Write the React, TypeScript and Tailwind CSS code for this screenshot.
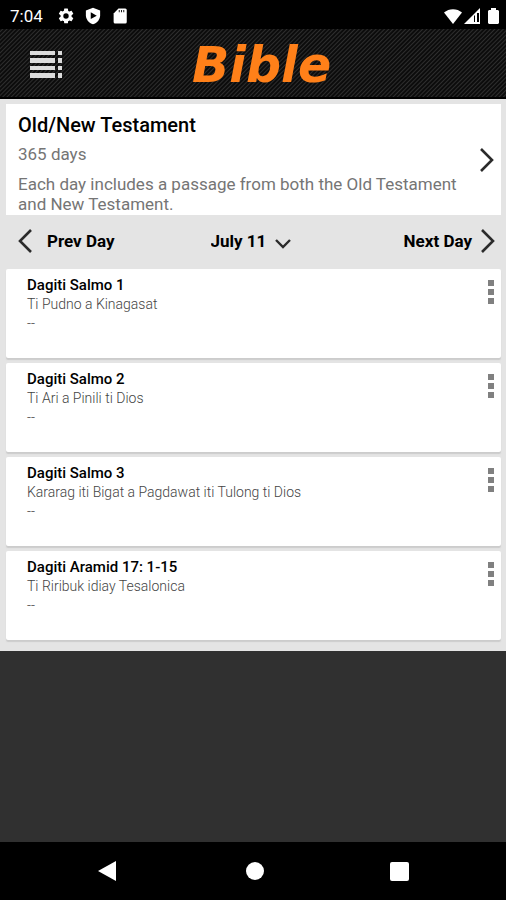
import React from "react";

type Reading = { id: number; passage: string; heading: string };

const readings: Reading[] = [
  { id: 1, passage: "Dagiti Salmo 1", heading: "Ti Pudno a Kinagasat" },
  { id: 2, passage: "Dagiti Salmo 2", heading: "Ti Ari a Pinili ti Dios" },
  { id: 3, passage: "Dagiti Salmo 3", heading: "Kararag iti Bigat a Pagdawat iti Tulong ti Dios" },
  { id: 4, passage: "Dagiti Aramid 17: 1-15", heading: "Ti Riribuk idiay Tesalonica" },
];

function Chevron({ direction }: { direction: "left" | "right" }) {
  return (
    <svg width="16" height="26" viewBox="0 0 16 26" fill="none" stroke="#2b2b2b" strokeWidth="2.6" aria-hidden="true">
      <path d={direction === "left" ? "M13 2 2 13l11 11" : "M3 2l11 11L3 24"} />
    </svg>
  );
}

function StatusBar() {
  return (
    <div className="flex h-[29px] items-center justify-between bg-black pt-[2px] pr-[7px] pl-[10px] text-white">
      <div className="flex items-center">
        <span className="w-[47px] text-[17px] leading-5">7:04</span>
        <svg width="18" height="18" viewBox="0 0 24 24" fill="#fff" aria-hidden="true">
          <path d="M19.4 13c.04-.3.06-.64.06-1s-.02-.68-.07-1l2.1-1.6c.2-.15.24-.42.12-.63l-2-3.4c-.12-.22-.37-.3-.6-.22l-2.4 1c-.5-.4-1.05-.7-1.65-.95l-.36-2.6A.5.5 0 0 0 14.1 2h-4a.5.5 0 0 0-.5.4l-.36 2.6c-.6.24-1.15.56-1.65.94l-2.4-1c-.22-.08-.47 0-.6.23l-2 3.4c-.12.22-.07.48.13.63L4.8 11a8 8 0 0 0 0 2l-2.1 1.6c-.2.15-.24.42-.12.63l2 3.4c.12.22.37.3.6.22l2.4-1c.5.4 1.05.7 1.65.95l.36 2.6c.04.24.25.4.5.4h4c.24 0 .45-.16.48-.4l.36-2.6c.6-.24 1.15-.56 1.65-.94l2.4 1c.22.08.47 0 .6-.23l2-3.4a.5.5 0 0 0-.13-.63zM12 15.6a3.6 3.6 0 1 1 0-7.2 3.6 3.6 0 0 1 0 7.2z" />
        </svg>
        <svg className="ml-[9px]" width="18" height="18" viewBox="0 0 24 24" aria-hidden="true">
          <path fill="#fff" d="M12 1 2.5 4.5V11c0 5.500 4 10.500 9.500 12 5.500-1.500 9.500-6.500 9.500-12V4.500z" />
          <path fill="#000" d="M9 7v9l8-4.500z" />
        </svg>
        <svg className="ml-[9px]" width="18" height="18" viewBox="0 0 24 24" aria-hidden="true">
          <path fill="#fff" d="M19 2H10L3.500 8.500V20a2 2 0 0 0 2 2H19a2 2 0 0 0 2-2V4a2 2 0 0 0-2-2z" />
          <path stroke="#000" strokeWidth="1.200" d="M11 4v3M14 4v3M17 4v3" />
        </svg>
      </div>
      <div className="flex items-center">
        <svg width="18" height="16" viewBox="0 0 18 16" fill="#fff" aria-hidden="true">
          <path d="M9 16 0 4.500C5 0 13 0 18 4.500z" />
        </svg>
        <svg className="ml-[2px]" width="16" height="16" viewBox="0 0 16 16" aria-hidden="true">
          <path fill="#fff" d="M16 0v16H0z" />
          <path fill="#000" d="M11 7v7h-1V8zM13 5h2v9h-2z" />
        </svg>
        <svg className="ml-[8px]" width="11" height="16" viewBox="0 0 11 16" fill="#fff" aria-hidden="true">
          <path d="M3 0h5v2h2l1 1v12l-1 1H1l-1-1V3l1-1h2z" />
        </svg>
      </div>
    </div>
  );
}

function Header() {
  return (
    <header className="grid h-[70px] grid-cols-[1fr_auto_1fr] items-center border-b-2 border-black bg-[#101010] bg-[repeating-linear-gradient(135deg,#0c0c0c_0px,#0c0c0c_1px,#2e2e2e_2px,#0c0c0c_3px)] pt-[2px] pr-3 pl-[29px]">
      <button type="button" aria-label="Table of contents" className="justify-self-start">
        <svg width="34" height="27" viewBox="0 0 34 27" fill="#dcdcdc" aria-hidden="true">
          <path d="M1 0h25v4H1zM1 7h25v5H1zM1 15h25v4H1zM1 22h25v5H1zM29 0h4v4h-4zM29 7h4v5h-4zM29 15h4v4h-4zM29 22h4v5h-4z" />
        </svg>
      </button>
      <h1 className="pt-1 font-['DejaVu_Sans',sans-serif] text-[49px] leading-[56px] font-bold text-[#ff8019] italic">
        Bible
      </h1>
    </header>
  );
}

function PlanCard() {
  return (
    <button type="button" className="flex w-full items-center justify-between bg-white pt-[9px] pr-[7px] pb-px pl-3 text-left">
      <span className="flex flex-col">
        <span className="text-[20px] leading-6 font-medium text-black">Old/New Testament</span>
        <span className="mt-[7px] text-[17px] leading-5 text-[#757575]">365 days</span>
        <span className="mt-[10px] text-[17px] leading-5 text-[#757575]">
          Each day includes a passage from both the Old Testament and New Testament.
        </span>
      </span>
      <span className="shrink-0 pb-2">
        <Chevron direction="right" />
      </span>
    </button>
  );
}

function DayNav() {
  return (
    <nav className="grid h-[54px] grid-cols-[1fr_auto_1fr] items-center pr-[6px] pb-[2px] pl-3 text-[17px] leading-5 font-bold text-black">
      <button type="button" className="flex items-center gap-[13px] justify-self-start">
        <Chevron direction="left" />
        <span>Prev Day</span>
      </button>
      <div className="relative mr-3">
        <select aria-label="Reading day" className="w-20 appearance-none bg-transparent" defaultValue="July 11">
          <option>July 11</option>
        </select>
        <svg className="pointer-events-none absolute top-2 right-0" width="16" height="10" viewBox="0 0 16 10" fill="none" stroke="#2b2b2b" strokeWidth="2.4" aria-hidden="true">
          <path d="M1 1l7 7 7-7" />
        </svg>
      </div>
      <button type="button" className="flex items-center gap-[7px] justify-self-end">
        <span>Next Day</span>
        <Chevron direction="right" />
      </button>
    </nav>
  );
}

function ReadingCard({ reading }: { reading: Reading }) {
  return (
    <li className="flex h-[89px] items-start justify-between rounded-[2px] bg-white pt-[7px] pr-[6px] pl-[21px] shadow-[0_2px_1px_#cccccc]">
      <div className="text-[14px] leading-[19px] font-light text-[#444444]">
        <h2 className="text-[15px] font-medium text-black">{reading.passage}</h2>
        <p>{reading.heading}</p>
        <p>--</p>
      </div>
      <button type="button" aria-label={"Options for " + reading.passage} className="mt-[3px]">
        <svg width="8" height="26" viewBox="0 0 8 26" fill="#808080" aria-hidden="true">
          <path d="M1 1h6v6H1zM1 10h6v6H1zM1 19h6v6H1z" />
        </svg>
      </button>
    </li>
  );
}

function SystemNav() {
  return (
    <nav className="flex h-[58px] items-center justify-around bg-black px-[34px]">
      <button type="button" aria-label="Back" className="pr-1">
        <svg width="20" height="22" viewBox="0 0 20 22" fill="#fff" aria-hidden="true">
          <path d="M19 1v20L1 11z" />
        </svg>
      </button>
      <button type="button" aria-label="Home" className="size-[18px] rounded-full bg-white" />
      <button type="button" aria-label="Recent apps" className="size-[19px] rounded-[2px] bg-white" />
    </nav>
  );
}

export default function App() {
  return (
    <div className="flex min-h-screen flex-col bg-[#303030] font-[Roboto,sans-serif]">
      <StatusBar />
      <Header />
      <main className="bg-[#e4e4e4] px-[5px] pt-[5px] pb-[11px] pl-[6px]">
        <PlanCard />
        <DayNav />
        <ul className="flex flex-col gap-[5px]">
          {readings.map((reading) => (
            <ReadingCard key={reading.id} reading={reading} />
          ))}
        </ul>
      </main>
      <div className="grow" />
      <SystemNav />
    </div>
  );
}
